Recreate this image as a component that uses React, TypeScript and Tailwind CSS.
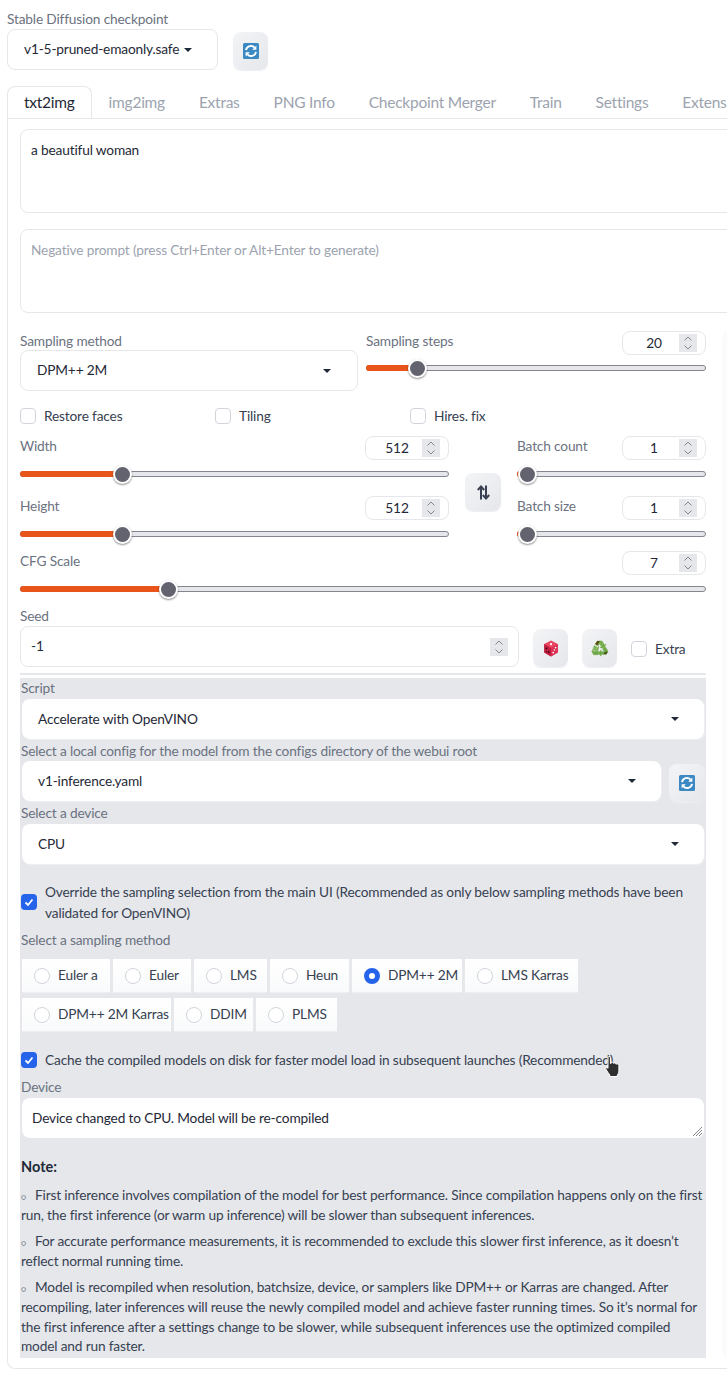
const RefreshIcon = () => (
  <svg width="16" height="16" viewBox="0 0 16 16">
    <rect width="16" height="16" rx="1.5" fill="#3b88c3" />
    <path d="M3 7.2a5 5 0 0 1 8.6-2.6" fill="none" stroke="#fff" strokeWidth="1.9" />
    <path d="M13.4 2.6v4.2H9.2z" fill="#fff" />
    <path d="M13 8.8a5 5 0 0 1-8.6 2.6" fill="none" stroke="#fff" strokeWidth="1.9" />
    <path d="M2.6 13.4V9.2h4.2z" fill="#fff" />
  </svg>
);

const DiceIcon = () => (
  <svg width="16" height="17" viewBox="0 0 16 17">
    <path d="M8 .5 14.8 4v8.6L8 16.5 1.2 12.6V4z" fill="#ea4763" />
    <path d="M1.2 4 8 8v8.5l-6.8-3.9z" fill="#c01d3f" />
    <path d="M14.8 4 8 8v8.5l6.8-3.9z" fill="#dd2e54" />
    <circle cx="8" cy="4.2" r="1.1" fill="#fff" />
    <circle cx="3.4" cy="8.4" r=".9" fill="#3a0a14" />
    <circle cx="5.8" cy="12" r=".9" fill="#3a0a14" />
    <circle cx="3.2" cy="11.6" r=".7" fill="#3a0a14" />
    <circle cx="12.6" cy="7.6" r=".9" fill="#fff" />
    <circle cx="10.2" cy="12.6" r=".9" fill="#fff" />
    <circle cx="11.4" cy="10" r=".8" fill="#fff" />
  </svg>
);

const RecycleIcon = () => (
  <svg width="18" height="17" viewBox="0 0 17 16">
    <g stroke="#77ad4a" strokeWidth=".6" strokeLinejoin="round">
      <path d="M6 1h4.4l2.2 3.6 1.4-.8-1.5 4-4-.6 1.4-.8L8.200 3.200 6.800 5.400 4 3.800z" fill="#77ad4a" />
      <path d="M3.200 5.200 6 7l1.300-.8-.8 4.100-4-.9 1.300-.7-.6-.4L1 11l2.200-5.800z" fill="#82b85c" />
      <path d="M.8 10.500 2.400 13.800H7v-3.200H3.200z" fill="#6ea84a" />
      <path d="M16 10.500 13.800 6.800 11 8.500l1.800 2.600H9.500V9.500L6.800 12.300l2.700 2.900v-1.700h4.700z" fill="#6ea84a" />
    </g>
    <path d="M6 1h2.400L5.800 5.200 4 3.800z" fill="#5c4a16" />
    <path d="M13 11.100h3l-1.400 2.400H12z" fill="#4b5a1c" />
  </svg>
);

const SwapIcon = () => (
  <svg width="13" height="15" viewBox="0 0 13 15" fill="none" stroke="#374151" strokeWidth="2">
    <path d="M4 14.500V2M.8 5 4 1.500 7.200 5" />
    <path d="M9 .5V13M5.800 10 9 13.500l3.200-3.500" />
  </svg>
);

const HandCursor = () => (
  <svg width="18" height="22" viewBox="0 0 18 22">
    <path
      d="M4 1.500c0-1.300 2.400-1.300 2.400 0v6l.6.100V6.500c1.300-.7 2.300-.4 2.400.8 1.200-.7 2.300-.4 2.500.8 1.300-.6 3 0 3 1.400v5.500c0 1.800-.8 3-1.600 4v1.500H5.800v-1.600c-1-1.300-2.400-3-3.800-5.600-.8-1.400.8-2.400 2-1z"
      fill="#2f2f2f"
      stroke="#fff"
      strokeWidth="1"
    />
  </svg>
);

const Caret = () => (
  <div className="w-0 h-0 shrink-0 border-l-[4px] border-r-[4px] border-t-[4px] border-l-transparent border-r-transparent border-t-[#1f2937]" />
);

const Spinner = () => (
  <svg className="bg-[#e5e7eb] shrink-0" width="18" height="18" viewBox="0 0 18 18" fill="none" stroke="#85858f" strokeWidth="1">
    <path d="M5.500 6.500 9 3l3.500 3.500" />
    <path d="M5.500 11.500 9 15l3.500-3.500" />
  </svg>
);

const Bullet = () => (
  <span className="inline-block w-[14px] text-[8px] leading-[0px] text-[#6b7280]">○</span>
);

const Label = ({ children }: { children: string }) => (
  <div className="h-[18px] leading-[18px] text-[#6b7280]">{children}</div>
);

const Dropdown = ({ value, w, caretRight }: { value: string; w: string; caretRight: string }) => (
  <div className={`flex items-center justify-between h-[41px] bg-white rounded-lg border border-[#e5e7eb] pl-[16px] text-[#1f2937] whitespace-nowrap ${w} ${caretRight}`}>
    <span>{value}</span>
    <Caret />
  </div>
);

const FlatDropdown = ({ value, w }: { value: string; w: string }) => (
  <div className={`flex items-center justify-between h-[40px] bg-white rounded-lg shadow-[1px_1px_0_#eceef1] pl-[16px] pr-[25px] text-[#1f2937] ${w}`}>
    <span>{value}</span>
    <Caret />
  </div>
);

const IconButton = ({ children, w = "w-[35px]" }: { children: React.ReactNode; w?: string }) => (
  <div className={`flex items-center justify-center h-[38px] rounded-lg bg-gradient-to-br from-[#f3f4f6] to-[#e5e7eb] shadow-[0_1px_1px_#eceef1] shrink-0 ${w}`}>
    {children}
  </div>
);

const NumberBox = ({ value }: { value: number }) => (
  <div className="flex items-center w-[84px] h-[24px] bg-white rounded-lg border border-[#e5e7eb] text-[#1f2937] shrink-0">
    <span className="w-[56px] pl-[6px] text-center">{value}</span>
    <Spinner />
  </div>
);

const Slider = ({ at }: { at: number }) => (
  <div className="relative mt-[5px] h-[18px] flex items-center">
    <div className="w-full h-[6px] rounded-full bg-[#e5e7eb] border border-[#85858f]" />
    <div className="absolute left-0 h-[6px] rounded-full bg-[#e8541a]" style={{ width: at }} />
    <div
      className="absolute w-[19px] h-[19px] rounded-full bg-[#63636f] border-2 border-white shadow-[0_1px_2px_rgba(0,0,0,0.45)]"
      style={{ left: at - 9.5 }}
    />
  </div>
);

const SliderBlock = ({ label, value, at }: { label: string; value: number; at: number }) => (
  <div>
    <div className="flex justify-between h-[24px]">
      <div className="pt-[1px]">
        <Label>{label}</Label>
      </div>
      <NumberBox value={value} />
    </div>
    <Slider at={at} />
  </div>
);

const Check = ({ label, x }: { label: string; x: string }) => (
  <div className={`flex items-center gap-[8px] ${x}`}>
    <div className="w-[16px] h-[16px] rounded-[4px] bg-white border border-[#d1d5db]" />
    <span className="text-[#374151]">{label}</span>
  </div>
);

const Checked = () => (
  <div className="flex items-center justify-center w-[16px] h-[16px] rounded-[4px] bg-[#2563eb] shrink-0">
    <svg width="10" height="10" viewBox="0 0 10 10" fill="none" stroke="#fff" strokeWidth="1.800">
      <path d="M1.500 5.500 4 8l4.500-5.500" />
    </svg>
  </div>
);

const Radio = ({ label, w, on }: { label: string; w: string; on?: boolean }) => (
  <div className={`flex items-center gap-[8px] pl-[12px] h-[33px] whitespace-nowrap bg-gradient-to-b from-white to-[#f9fafb] shadow-[0_1px_1px_#eceef1] text-[#374151] ${w}`}>
    {on ? (
      <div className="w-[16px] h-[16px] rounded-full border-[5px] border-[#2563eb] bg-white" />
    ) : (
      <div className="w-[16px] h-[16px] rounded-full border border-[#d1d5db] bg-white" />
    )}
    <span>{label}</span>
  </div>
);

const tabs = ["img2img", "Extras", "PNG Info", "Checkpoint Merger", "Train", "Settings", "Extensions"];

export default function App() {
  return (
    <div className="w-[727px] h-[1376px] overflow-hidden bg-white pl-[7px] pt-[10px] text-[13.7px] tracking-[-0.16px] font-['Lato','Liberation_Sans',sans-serif]">
      {/* Checkpoint */}
      <Label>Stable Diffusion checkpoint</Label>
      <div className="flex items-end gap-[15px] mt-[1px]">
        <Dropdown value="v1-5-pruned-emaonly.safe" w="w-[211px]" caretRight="pr-[25px]" />
        <IconButton>
          <RefreshIcon />
        </IconButton>
      </div>

      {/* Tabs */}
      <div className="flex w-[720px] overflow-hidden h-[33px] mt-[16px] border-b border-[#e5e7eb] whitespace-nowrap text-[15.5px] tracking-[-0.25px]">
        <div className="h-[33px] px-[16px] leading-[31px] bg-white rounded-t-lg border border-b-0 border-[#e5e7eb] text-[#1f2937]">
          txt2img
        </div>
        {tabs.map((t) => (
          <div key={t} className="px-[17px] leading-[33px] text-[#9ca3af]">
            {t}
          </div>
        ))}
      </div>

      {/* Panel */}
      <div className="w-[800px] h-[1250px] border-l border-b border-[#e5e7eb] rounded-bl-lg pl-[12px] pt-[10px]">
        <div className="w-[780px] h-[84px] rounded-lg border border-[#e5e7eb] pl-[10px] pt-[10px] leading-[20px] text-[#1f2937]">
          a beautiful woman
        </div>
        <div className="w-[780px] h-[84px] mt-[16px] rounded-lg border border-[#e5e7eb] pl-[10px] pt-[10px] leading-[20px] text-[#9ca3af]">
          Negative prompt (press Ctrl+Enter or Alt+Enter to generate)
        </div>

        <div className="flex gap-[16px] mt-[18px]">
          <div className="w-[686px] shrink-0">
            {/* Sampling */}
            <div className="flex gap-[8px]">
              <div className="w-[338px]">
                <div className="pt-[1px]">
                  <Label>Sampling method</Label>
                </div>
                <Dropdown value="DPM++ 2M" w="w-[338px]" caretRight="pr-[26px]" />
              </div>
              <div className="w-[340px]">
                <div className="flex justify-between h-[24px]">
                  <div className="pt-[1px]">
                    <Label>Sampling steps</Label>
                  </div>
                  <NumberBox value={20} />
                </div>
                <div className="-mt-[1px]">
                  <Slider at={51} />
                </div>
              </div>
            </div>

            <div className="flex h-[16px] mt-[17px]">
              <Check label="Restore faces" x="w-[195px]" />
              <Check label="Tiling" x="w-[195px]" />
              <Check label="Hires. fix" x="w-[195px]" />
            </div>

            {/* Size and batch */}
            <div className="flex mt-[12px]">
              <div className="w-[429px] flex flex-col gap-[13px]">
                <SliderBlock label="Width" value={512} at={102} />
                <SliderBlock label="Height" value={512} at={102} />
              </div>
              <div className="ml-[16px] mt-[37px]">
                <IconButton w="w-[36px]">
                  <SwapIcon />
                </IconButton>
              </div>
              <div className="w-[189px] ml-[16px] flex flex-col gap-[13px]">
                <SliderBlock label="Batch count" value={1} at={10} />
                <SliderBlock label="Batch size" value={1} at={10} />
              </div>
            </div>

            <div className="mt-[8px]">
              <SliderBlock label="CFG Scale" value={7} at={148} />
            </div>

            {/* Seed */}
            <div className="mt-[9px]">
              <Label>Seed</Label>
            </div>
            <div className="flex mt-[1px]">
              <div className="flex items-center justify-between w-[499px] h-[41px] rounded-lg border border-[#e5e7eb] pl-[10px] pr-[10px] text-[#1f2937]">
                <span>-1</span>
                <Spinner />
              </div>
              <div className="flex gap-[14px] ml-[14px] mt-[3px]">
                <IconButton>
                  <DiceIcon />
                </IconButton>
                <IconButton>
                  <RecycleIcon />
                </IconButton>
              </div>
              <div className="ml-[14px] mt-[13px]">
                <Check label="Extra" x="" />
              </div>
            </div>

            <div className="h-[2px] mt-[6px] bg-[#e5e7eb]" />

            {/* Script */}
            <div className="h-[680px] mt-[3px] bg-[#e5e7eb] pl-[1px] pr-[1px] pt-[1px] text-[#374151]">
              <Label>Script</Label>
              <div className="ml-[1px] mt-[2px]">
                <FlatDropdown value="Accelerate with OpenVINO" w="w-[682px]" />
              </div>
              <div className="mt-[3px]">
                <Label>Select a local config for the model from the configs directory of the webui root</Label>
              </div>
              <div className="flex items-end gap-[8px] ml-[1px] mt-[1px]">
                <FlatDropdown value="v1-inference.yaml" w="w-[639px]" />
                <div className="-mb-[1px]">
                  <IconButton w="w-[36px]">
                    <RefreshIcon />
                  </IconButton>
                </div>
              </div>
              <div className="mt-[3px]">
                <Label>Select a device</Label>
              </div>
              <div className="ml-[1px] mt-[2px]">
                <FlatDropdown value="CPU" w="w-[682px]" />
              </div>

              <div className="flex items-center gap-[8px] mt-[17px] leading-[21px] whitespace-nowrap">
                <Checked />
                <span>
                  Override the sampling selection from the main UI (Recommended as only below sampling methods have been
                  <br />
                  validated for OpenVINO)
                </span>
              </div>

              <div className="mt-[8px]">
                <Label>Select a sampling method</Label>
              </div>
              <div className="flex flex-col gap-[6px] ml-[1px] mt-[10px]">
                <div className="flex gap-[3px]">
                  <Radio label="Euler a" w="w-[88px]" />
                  <Radio label="Euler" w="w-[78px]" />
                  <Radio label="LMS" w="w-[73px]" />
                  <Radio label="Heun" w="w-[79px]" />
                  <Radio label="DPM++ 2M" w="w-[110px]" on />
                  <Radio label="LMS Karras" w="w-[113px]" />
                </div>
                <div className="flex gap-[3px]">
                  <Radio label="DPM++ 2M Karras" w="w-[149px]" />
                  <Radio label="DDIM" w="w-[79px]" />
                  <Radio label="PLMS" w="w-[81px]" />
                </div>
              </div>

              <div className="relative flex items-center gap-[8px] mt-[21px] h-[16px] whitespace-nowrap">
                <Checked />
                <span>Cache the compiled models on disk for faster model load in subsequent launches (Recommended)</span>
                <div className="absolute left-[583px] top-[4px]">
                  <HandCursor />
                </div>
              </div>

              <div className="mt-[10px]">
                <Label>Device</Label>
              </div>
              <div className="relative flex items-center ml-[1px] mt-[2px] w-[682px] h-[40px] bg-white rounded-lg pl-[10px] text-[#1f2937]">
                Device changed to CPU. Model will be re-compiled
                <svg className="absolute right-[1px] bottom-[1px]" width="11" height="11" viewBox="0 0 11 11" stroke="#85858f" strokeWidth="1">
                  <path d="M10 1 1 10M10 4 4 10M10 7 7 10" />
                </svg>
              </div>

              <div className="mt-[20px] h-[18px] leading-[18px] font-bold text-[14.5px] tracking-normal text-[#1f2937]">Note:</div>
              <div className="mt-[9px] leading-[19.600px] flex flex-col gap-[7px] whitespace-nowrap">
                <p>
                  <Bullet />
                  First inference involves compilation of the model for best performance. Since compilation happens only on the first
                  <br />
                  run, the first inference (or warm up inference) will be slower than subsequent inferences.
                </p>
                <p>
                  <Bullet />
                  For accurate performance measurements, it is recommended to exclude this slower first inference, as it doesn’t
                  <br />
                  reflect normal running time.
                </p>
                <p>
                  <Bullet />
                  Model is recompiled when resolution, batchsize, device, or samplers like DPM++ or Karras are changed. After
                  <br />
                  recompiling, later inferences will reuse the newly compiled model and achieve faster running times. So it’s normal for
                  <br />
                  the first inference after a settings change to be slower, while subsequent inferences use the optimized compiled
                  <br />
                  model and run faster.
                </p>
              </div>
            </div>
          </div>

          {/* Output column, mostly off screen */}
          <div className="w-[200px] h-[1028px] rounded-lg bg-[#fbfbfc]" />
        </div>
      </div>
    </div>
  );
}
